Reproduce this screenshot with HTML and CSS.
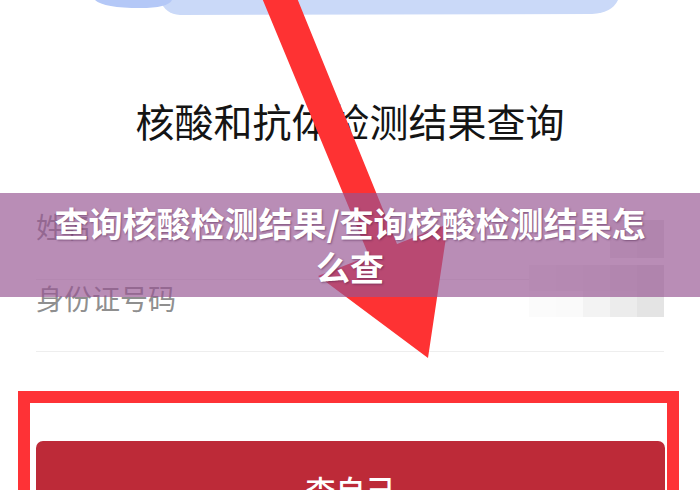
FILE: index.html
```html
<!DOCTYPE html>
<html lang="zh-CN">
<head>
    <meta charset="UTF-8" />
    <meta name="viewport" content="width=device-width, initial-scale=1" />
    <title>查询核酸检测结果</title>
    <link rel="stylesheet" href="styles.css">
</head>
<body>
    <div class="page">
        <div class="hero">
            <svg width="700" height="22" viewBox="0 0 700 22">
                <path d="M160 0 H618 Q612 13 592 14 L180 15 Q165 14 160 0 Z" fill="#cad9f8" />
                <path d="M95 0 H172 Q168 8 140 8 Q104 8 95 0 Z" fill="#b4c8f7" />
            </svg>
        </div>

        <h1 class="title">核酸和抗体检测结果查询</h1>

        <div class="form">
            <div class="row">
                <span class="label">姓名</span>
                <div class="mosaic mosaic-short">
                    <i style="background:#ededed"></i><i style="background:#e6e6e6"></i>
                </div>
            </div>
            <div class="row">
                <span class="label">身份证号码</span>
                <div class="mosaic">
                    <i style="background:#f6f6f6"></i><i style="background:#f3f3f3"></i><i style="background:#eeeeee"></i><i style="background:#e9e9e9"></i><i style="background:#e4e4e4"></i>
                    <i style="background:#fbfbfb"></i><i style="background:#fafafa"></i><i style="background:#f3f3f3"></i><i style="background:#ececec"></i><i style="background:#e4e4e4"></i>
                </div>
            </div>
        </div>

        <div class="mark">
            <button class="btn">查自己</button>
        </div>

        <svg class="arrow" width="700" height="490" viewBox="0 0 700 490">
            <polygon points="262,-2 297,-2 397,244 448,224 428,358 318,276 369,256" fill="#fe3233" />
        </svg>

        <div class="banner">查询核酸检测结果/查询核酸检测结果怎么查</div>
    </div>
</body>
</html>
```

FILE: styles.css
```css
body { margin: 0; background: #fff; font-family: "Noto Sans CJK SC", "Noto Sans", sans-serif; }
.page { position: relative; width: 700px; height: 490px; overflow: hidden; background: #fff; }
.hero { height: 22px; }
.hero svg { display: block; }
.title { margin: 78px 0 0; font-size: 39px; font-weight: 400; line-height: 40px; text-align: center; color: #141414; }
.form { margin-top: 68px; padding: 0 36px 0 36px; }
.row { display: flex; justify-content: space-between; align-items: flex-start; height: 36px; padding-bottom: 35px; border-bottom: 1px solid #eeeeee; }
.label { font-size: 28px; line-height: 36px; color: #8f8f8f; }
.mosaic { display: grid; grid-template-columns: repeat(5, 27px); grid-template-rows: 26px 26px; margin: -15px 0 0; }
.mosaic i { display: block; }
.mosaic-short { grid-template-columns: repeat(2, 27px); grid-template-rows: 38px; margin: 12px 0 0; }
.mark { margin: 39px 21px 0 18px; border: 12px solid #fe3236; padding: 38px 2px 0 6px; }
.btn { display: block; width: 100%; height: 96px; border: none; border-radius: 7px; background: #bd2a38; color: #fff; font-family: inherit; font-size: 30px; font-weight: 500; }
.arrow { position: absolute; left: 0; top: 0; }
.banner { position: absolute; left: 0; top: 193px; width: 700px; height: 104px; box-sizing: border-box; padding: 8px 48px 0; background: rgba(151, 85, 146, 0.67); color: #fff; font-size: 34px; font-weight: 700; line-height: 44px; text-align: center; text-shadow: 1px 1px 2px rgba(60, 20, 60, 0.45); }
```
